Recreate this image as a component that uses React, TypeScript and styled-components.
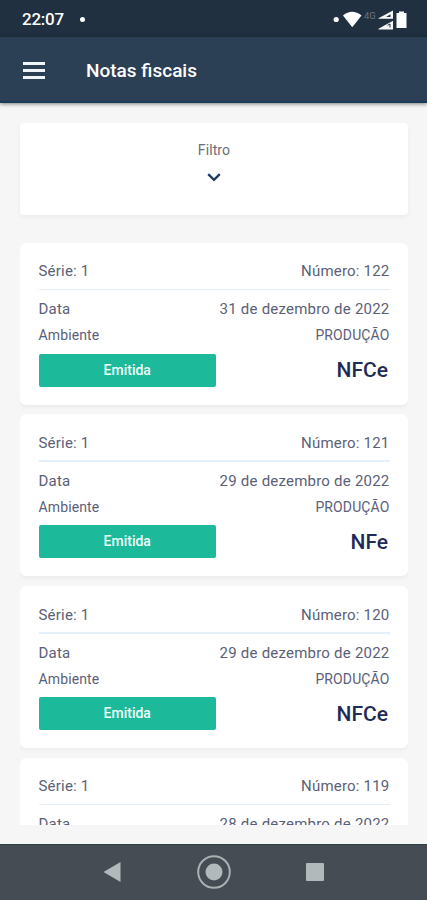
import React from "react";
import styled, { createGlobalStyle } from "styled-components";

const GlobalStyle = createGlobalStyle`
  * { box-sizing: border-box; }
  body { margin: 0; background: #f6f6f6; font-family: Roboto, "Liberation Sans", sans-serif; }
`;

const Screen = styled.div`
  display: flex;
  flex-direction: column;
  width: 427px;
  height: 900px;
  overflow: hidden;
  background: #f6f6f6;
`;

const StatusBar = styled.div`
  flex: none;
  display: flex;
  align-items: center;
  height: 37px;
  padding: 2px 20px 0 22px;
  background: #203040;
  color: #fff;
`;

const Clock = styled.span`
  font-size: 17px;
  font-weight: 500;
  line-height: 20px;
  letter-spacing: -0.25px;
  transform: translateY(-1px);
`;

const Dot = styled.span<{ $gap: number }>`
  width: 5px;
  height: 5px;
  margin-left: ${(p) => p.$gap}px;
  border-radius: 50%;
  background: #fff;
`;

const StatusIcons = styled.svg`
  display: block;
  margin-left: auto;
`;

const AppBar = styled.header`
  position: relative;
  z-index: 1;
  flex: none;
  display: flex;
  align-items: center;
  height: 66px;
  padding: 3px 23px 0;
  background: #2c4055;
  border-bottom: 2px solid #1b3c58;
  box-shadow: 0 1px 4px rgba(0, 0, 0, 0.5);
`;

const MenuButton = styled.button`
  display: flex;
  flex-direction: column;
  gap: 4px;
  width: 22px;
  padding: 0;
  border: 0;
  background: none;
`;

const MenuLine = styled.span`
  height: 3px;
  background: #f2f5f8;
`;

const Title = styled.h1`
  margin: 0 0 0 41px;
  color: #fff;
  font-size: 19px;
  font-weight: 500;
  line-height: 24px;
`;

const Content = styled.main`
  flex: 1;
  min-height: 0;
  display: flex;
  flex-direction: column;
  padding: 19.5px 19px 19px 20px;
`;

const FilterCard = styled.section`
  flex: none;
  display: flex;
  flex-direction: column;
  align-items: center;
  gap: 10px;
  height: 92.5px;
  padding-top: 18px;
  border-radius: 4px;
  background: #fff;
  box-shadow: 0 2px 4px rgba(0, 0, 0, 0.05);
  color: #6a6d80;
  font-size: 14px;
  line-height: 18px;
  letter-spacing: 0.1px;
`;

const List = styled.div`
  flex: 1;
  min-height: 0;
  display: flex;
  flex-direction: column;
  gap: 9.7px;
  margin-top: 27.8px;
  overflow: hidden;
`;

const Card = styled.article`
  flex: none;
  height: 162px;
  padding: 17px 18.5px 0;
  border-radius: 6px;
  background: #fff;
  box-shadow: 0 2px 4px rgba(0, 0, 0, 0.05);
`;

const Row = styled.div<{ $size: number; $height: number; $tracking: number }>`
  display: flex;
  align-items: center;
  justify-content: space-between;
  height: ${(p) => p.$height}px;
  color: #5b5f78;
  font-size: ${(p) => p.$size}px;
  letter-spacing: ${(p) => p.$tracking}px;
`;

const Divider = styled.hr`
  height: 1.5px;
  margin: 6px 0 7px;
  border: 0;
  background: #e3effa;
`;

const Footer = styled.div`
  display: flex;
  align-items: center;
  justify-content: space-between;
  height: 33px;
  margin-top: 4.5px;
  padding-right: 1.5px;
`;

const Status = styled.div`
  width: 177.5px;
  height: 33px;
  border-radius: 2px;
  background: #1cb99a;
  color: #f2fffb;
  font-size: 14px;
  font-weight: 500;
  line-height: 33px;
  text-align: center;
`;

const Kind = styled.strong`
  color: #1f2a57;
  font-size: 21px;
  font-weight: 500;
`;

const NavBar = styled.nav`
  flex: none;
  display: flex;
  align-items: center;
  justify-content: space-between;
  height: 56px;
  padding: 0 103px 1px;
  background: #454c53;
  border-top: 1.5px solid #2b4140;
`;

const invoices = [
  { number: 122, date: "31 de dezembro de 2022", kind: "NFCe" },
  { number: 121, date: "29 de dezembro de 2022", kind: "NFe" },
  { number: 120, date: "29 de dezembro de 2022", kind: "NFCe" },
  { number: 119, date: "28 de dezembro de 2022", kind: "NFCe" },
];

export default function App() {
  return (
    <>
      <GlobalStyle />
      <Screen>
        <StatusBar>
          <Clock>22:07</Clock>
          <Dot $gap={16} />
          <StatusIcons width="76" height="22" viewBox="331 8 76 22">
            <circle cx="336.2" cy="18.5" r="2.6" fill="#fff" />
            <path d="M343 14.500Q352 7 361.500 14.500L352.300 26.300Z" fill="#fff" />
            <text x="364" y="17.500" fill="#68747f" fontSize="9.500" fontFamily="Roboto">4G</text>
            <path d="M378.500 17.300L393 9.500V17.800H378.500Z" fill="#f4f6f7" />
            <path d="M386 16L390.500 13.300V16Z" fill="#203040" />
            <path d="M378.500 27.800L393 19.800V28.500H378.500Z" fill="#f4f6f7" />
            <path d="M387.500 24.300L390 23V26.500" fill="none" stroke="#203040" strokeWidth="1" />
            <path d="M399 10.500h5v1.500h2.500v15h-10v-15h2.500z" fill="#fff" />
          </StatusIcons>
        </StatusBar>
        <AppBar>
          <MenuButton aria-label="Menu">
            <MenuLine />
            <MenuLine />
            <MenuLine />
          </MenuButton>
          <Title>Notas fiscais</Title>
        </AppBar>
        <Content>
          <FilterCard>
            Filtro
            <svg width="16" height="16" viewBox="0 0 16 16" fill="none" stroke="#1f3b63" strokeWidth="2.300">
              <path d="M2.200 5.200L8 10.800L13.800 5.200" />
            </svg>
          </FilterCard>
          <List>
            {invoices.map((invoice) => (
              <Card key={invoice.number}>
                <Row $size={15} $height={23} $tracking={0.2}>
                  <span>Série: 1</span>
                  <span>Número: {invoice.number}</span>
                </Row>
                <Divider />
                <Row $size={15} $height={24} $tracking={0.22}>
                  <span>Data</span>
                  <span>{invoice.date}</span>
                </Row>
                <Row $size={14} $height={28} $tracking={0.12}>
                  <span>Ambiente</span>
                  <span>PRODUÇÃO</span>
                </Row>
                <Footer>
                  <Status>Emitida</Status>
                  <Kind>{invoice.kind}</Kind>
                </Footer>
              </Card>
            ))}
          </List>
        </Content>
        <NavBar>
          <svg width="18" height="20" viewBox="0 0 18 20">
            <path d="M17.500 0V20L0.500 10Z" fill="#b2b9ba" />
          </svg>
          <svg width="34" height="34" viewBox="0 0 34 34">
            <circle cx="17" cy="17" r="15.800" fill="none" stroke="#a9b1b3" strokeWidth="2" />
            <circle cx="17" cy="17" r="8.500" fill="#b2b9ba" />
          </svg>
          <svg width="18" height="18" viewBox="0 0 18 18">
            <rect width="18" height="18" rx="1" fill="#b2b9ba" />
          </svg>
        </NavBar>
      </Screen>
    </>
  );
}
